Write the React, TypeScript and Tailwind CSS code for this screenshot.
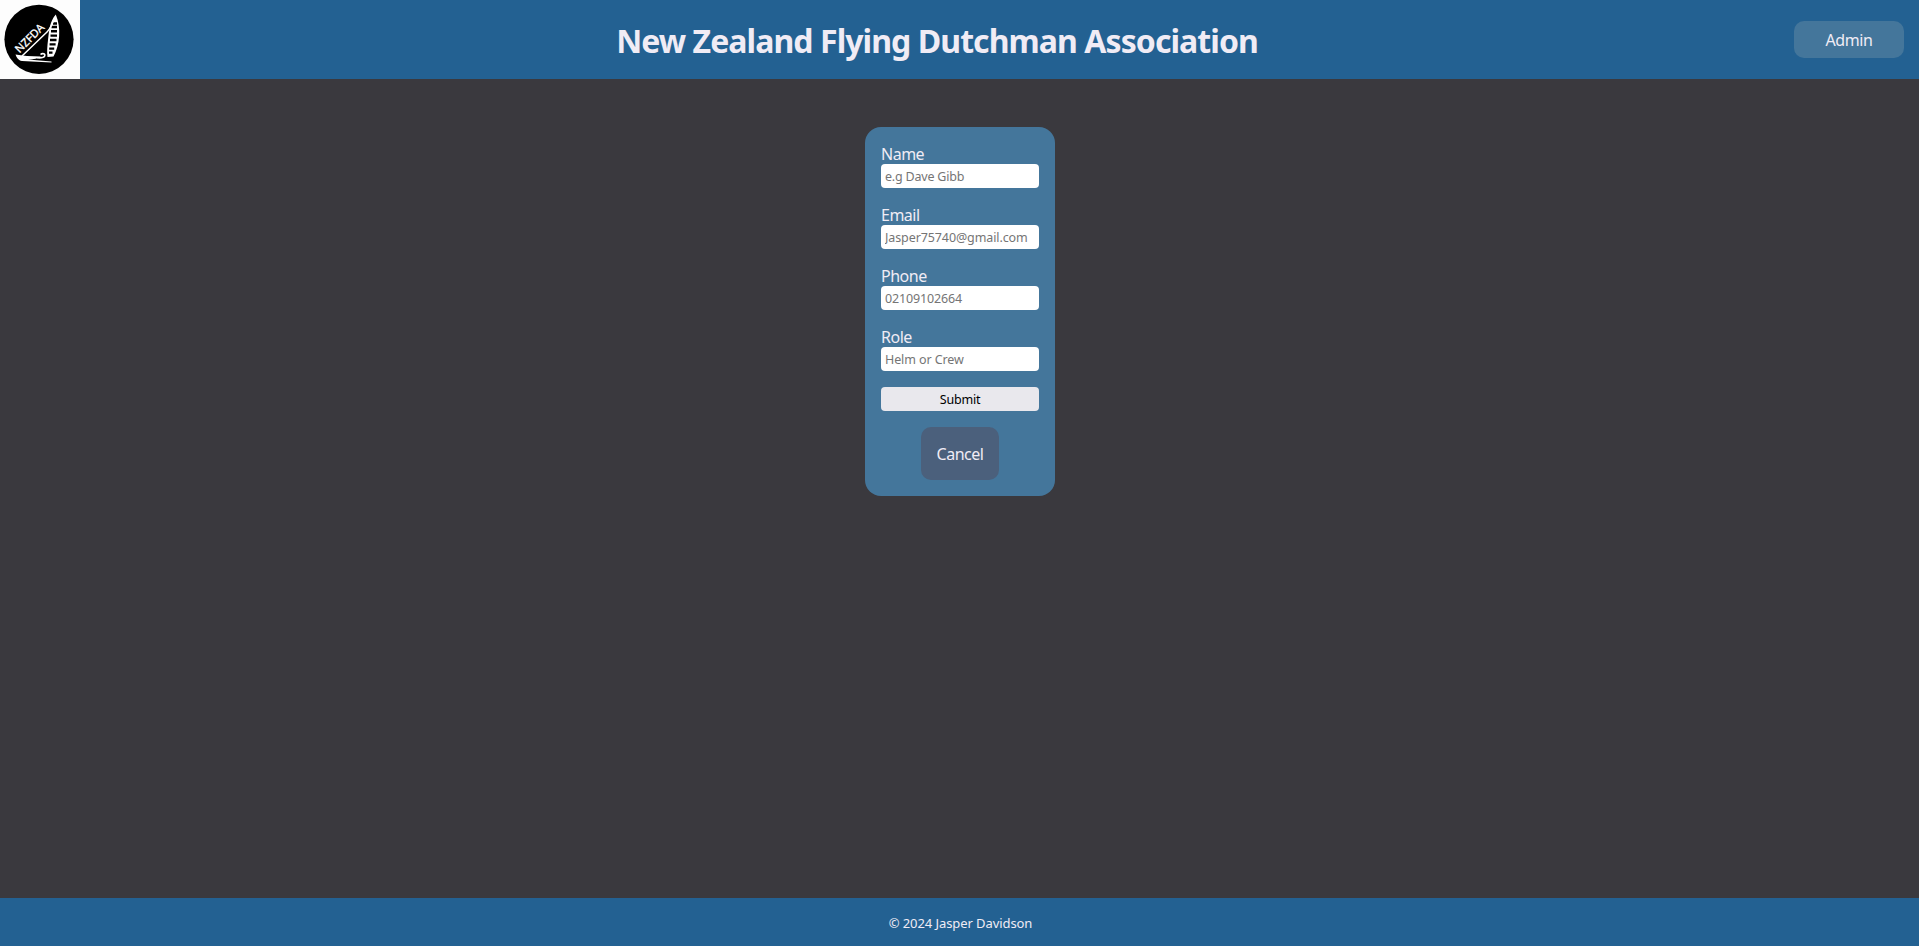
function Logo() {
  return (
    <svg viewBox="0 0 80 79" className="h-[79px] w-20 shrink-0 bg-[#fdfdfd]" role="img" aria-label="NZFDA">
      <circle cx="39" cy="39.3" r="34.6" fill="#000" />
      <text
        x="0"
        y="0"
        transform="translate(19.6 53.6) rotate(-45)"
        fill="#fff"
        stroke="#fff"
        strokeWidth="0.3"
        fontSize="11"
        textLength="36"
        lengthAdjust="spacingAndGlyphs"
        style={{ fontFamily: '"Noto Sans", sans-serif' }}
      >
        NZFDA
      </text>
      <path d="M55.8 14.5C49.5 22 49.3 30 48 40C47.3 46 46.8 52 47.5 57L53.5 56.5C59.8 45 61.5 28 55.8 14.5Z" fill="#fff" />
      <path
        d="M53 23.5h4M51.5 27h5.5M51 31.2h6M50.5 35.6h6.5M50 40h6.5M49.6 44.4h6M49.2 48.6h5M49 52.6h3.5"
        stroke="#000"
        strokeWidth="2.4"
      />
      <path d="M55 17C52.5 24 49.5 29.5 47 32L22 56" stroke="#fff" strokeWidth="1.5" fill="none" />
      <path d="M15.5 54.5C22 55.8 31 56.5 41 56.5C38 58.5 34 59.5 28 59.6L51.5 61.4V62.6L22 61C18.5 60.5 16.5 57.5 15.5 54.5Z" fill="#fff" />
      <path d="M40.5 54.5C42.8 52.6 45.5 54 44.6 56.2C43.5 58.3 40.5 58 37 57.7" stroke="#fff" strokeWidth="1.6" fill="none" />
    </svg>
  );
}

const fields = [
  { id: "name", label: "Name", placeholder: "e.g Dave Gibb", tracking: "tracking-[-0.2px]" },
  { id: "email", label: "Email", placeholder: "Jasper75740@gmail.com", tracking: "tracking-[-0.1px]" },
  { id: "phone", label: "Phone", placeholder: "02109102664", tracking: "tracking-[-0.15px]" },
  { id: "role", label: "Role", placeholder: "Helm or Crew", tracking: "tracking-[-0.1px]" },
];

export default function App() {
  return (
    <div className="flex h-screen flex-col bg-[#3a393e] font-['Noto_Sans',sans-serif] text-base text-[#f0ecf5]">
      <header className="flex h-[79px] shrink-0 items-center justify-between bg-[#236192] pr-[15px]">
        <Logo />
        <h1 className="whitespace-nowrap pt-0.5 text-[32px] leading-[43px] font-bold tracking-[-0.93px]">
          New Zealand Flying Dutchman Association
        </h1>
        <button className="h-[37px] w-[110px] rounded-[10px] bg-[#44769b] pt-px tracking-[-0.4px]">Admin</button>
      </header>
      <main className="flex flex-1 flex-col items-center pt-12 pl-px">
        <form className="flex h-[369px] w-[190px] flex-col items-center gap-4 rounded-2xl bg-[#44769b] p-4">
          {fields.map((f) => (
            <div key={f.id} className="flex w-full flex-col">
              <label htmlFor={f.id} className="h-[21px] leading-[23px] tracking-[-0.5px]">{f.label}</label>
              <input
                id={f.id}
                placeholder={f.placeholder}
                className={`h-6 w-full rounded bg-white px-1 text-[12.5px] text-black placeholder:text-[#757575] ${f.tracking}`}
              />
            </div>
          ))}
          <button type="button" className="h-6 w-full shrink-0 rounded bg-[#e9e8ed] pt-0.5 text-[12.5px] leading-[22px] tracking-[-0.2px] text-black">
            Submit
          </button>
          <button type="button" className="h-[53px] w-[78px] shrink-0 rounded-[10px] bg-[#4b607c] pt-px tracking-[-0.5px]">Cancel</button>
        </form>
      </main>
      <footer className="flex h-12 shrink-0 items-center justify-center bg-[#236192] pt-1 pl-0.5 text-[13px] tracking-[-0.08px]">
        © 2024 Jasper Davidson
      </footer>
    </div>
  );
}
